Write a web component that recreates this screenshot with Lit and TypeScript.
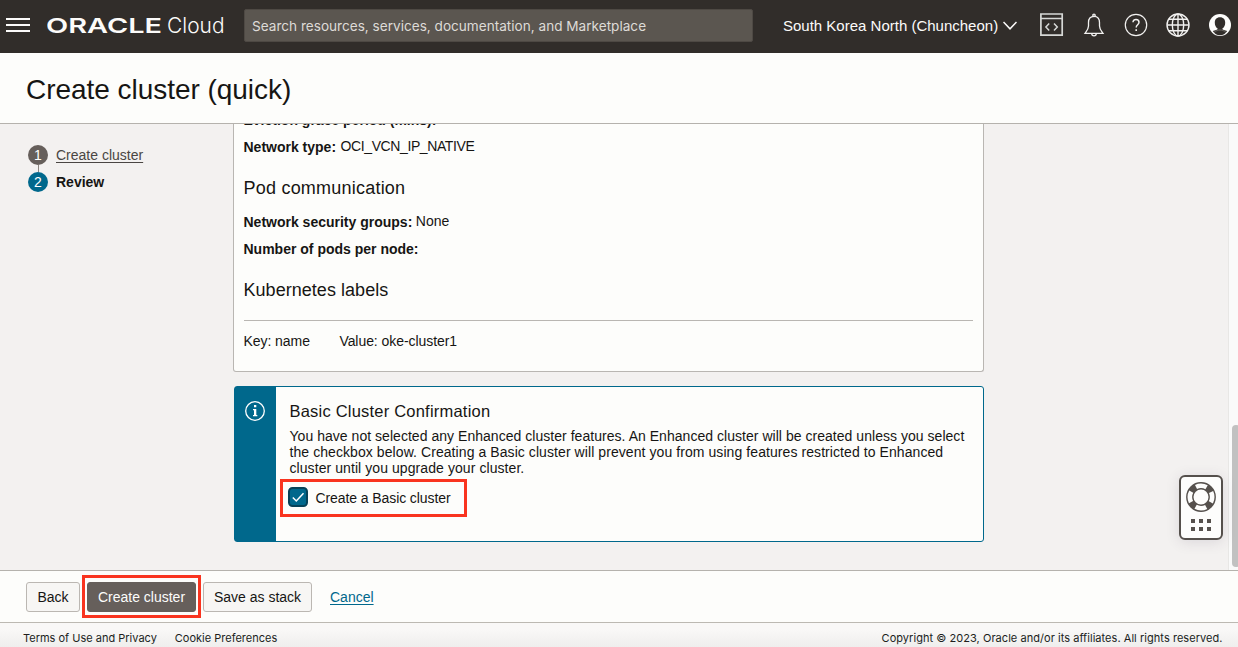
import { LitElement, html, css, svg } from "lit";
import { customElement, property } from "lit/decorators.js";

@customElement("cloud-header")
class CloudHeader extends LitElement {
  static styles = css`
    :host { display: block; flex: none; }
    .bar { display: flex; align-items: center; height: 53px; box-sizing: border-box; background: #312d2a; padding: 0 6px 3px; color: #fcfbfa; }
    .menu { display: flex; flex-direction: column; gap: 4px; width: 24px; margin-right: 17px; }
    .menu i { height: 2px; background: #fcfbfa; }
    .brand { display: block; width: 180px; height: 30px; margin-right: 17px; }
    .search { width: 509px; height: 33px; box-sizing: border-box; border: 1px solid #4e4944; border-radius: 2px; margin-top: 1px; background: #5b5650; color: #dedbd7; font: 13.6px/32px Inter, sans-serif; padding-left: 7px; white-space: nowrap; }
    .region { display: flex; align-items: center; margin-left: 30px; gap: 5px; font: 15px/20px "Liberation Sans", Arial, sans-serif; width: 235px; white-space: nowrap; margin-top: 1px; }
    .tools { display: flex; align-items: center; margin-left: 22px; gap: 18px; }
    svg { display: block; flex: none; }
  `;
  render() {
    return html`<header class="bar">
      <div class="menu"><i></i><i></i><i></i></div>
      <svg class="brand" viewBox="0 0 180 30" fill="#fcfbfa">
        <text x="-1" y="23" font-family="Inter, sans-serif" font-weight="600" font-size="20.500" textLength="116" lengthAdjust="spacingAndGlyphs">ORACLE</text>
        <text x="120" y="23" font-family="Inter, sans-serif" font-weight="300" font-size="21.500" textLength="57.500" lengthAdjust="spacingAndGlyphs">Cloud</text>
      </svg>
      <div class="search">Search resources, services, documentation, and Marketplace</div>
      <div class="region"><span>South Korea North (Chuncheon)</span>
        <svg width="14" height="9" viewBox="0 0 14 9" fill="none" stroke="#fcfbfa" stroke-width="1.5"><path d="M0.5 1 7 7.800 13.500 1"/></svg>
      </div>
      <div class="tools">
        <svg width="24" height="24" viewBox="0 0 24 24" fill="none" stroke="#d6d8d6" stroke-width="1.700"><path d="M.9 1H22.200V22.200H.9ZM1 5.500H22"/><path d="M9.200 10.500 5.900 14l3.300 3.500M14 10.500 17.300 14l-3.300 3.500" stroke-width="1.500"/></svg>
        <svg width="24" height="24" viewBox="0 0 24 24" fill="none" stroke="#f2f1f0" stroke-width="1.300"><path d="M12 3.300c-4 0-5.500 2.700-5.500 6.200v3.500c0 3-1.500 4.500-3.500 7.300h18c-2-2.800-3.500-4.300-3.500-7.300V9.500c0-3.500-1.500-6.200-5.500-6.200Z"/><circle cx="12" cy="2.300" r="1.200"/><path d="M9.700 20.600a2.300 2.300 0 0 0 4.600 0"/></svg>
        <svg width="24" height="24" viewBox="0 0 24 24" fill="none" stroke="#f2f1f0" stroke-width="1.200"><circle cx="12" cy="12" r="10.700"/><path d="M9 9.300c0-4 6-3.700 6 0 0 2.500-2.800 2.400-2.800 5.200" stroke-width="1.500"/><path d="M12.200 16.200v1.700" stroke-width="1.600"/></svg>
        <svg width="24" height="24" viewBox="0 0 24 24" fill="none" stroke="#f2f1f0" stroke-width="1.400"><circle cx="12" cy="12" r="11"/><ellipse cx="12" cy="12" rx="5.700" ry="11"/><path d="M12 1v22M1 12h22M3 6.300h18M3 17.700h18"/></svg>
        <svg width="24" height="24" viewBox="0 0 24 24"><circle cx="12" cy="12" r="11" fill="#fdfdfc"/><path d="M12 4.200c3.500 0 5.200 2.300 5.200 5.500 0 2.700-1.200 4.800-3 6 .2 1.100 2.800 1.700 5 2.300-1.600 2.800-4.200 4.300-7.200 4.300s-5.600-1.500-7.200-4.300c2.200-.6 4.800-1.200 5-2.300-1.800-1.200-3-3.300-3-6 0-3.200 1.700-5.500 5.200-5.500Z" fill="#312d2a"/><path d="M6 19.500c2-2 4-2.500 6-2.500s4 .5 6 2.500" fill="none" stroke="#77736f" stroke-width=".8"/></svg>
      </div>
    </header>`;
  }
}

@customElement("wizard-steps")
class WizardSteps extends LitElement {
  static styles = css`
    :host { display: block; }
    .step { display: flex; align-items: center; gap: 8px; height: 20px; font: 14px/20px "Liberation Sans", Arial, sans-serif; color: #4a4643; white-space: nowrap; }
    .num { width: 20px; height: 20px; border-radius: 50%; background: #665f5b; color: #fff; text-align: center; }
    .link { text-decoration: underline; text-underline-offset: 2px; }
    .line { width: 1px; height: 7px; margin-left: 10px; background: #8b8580; }
    .current { color: #161513; font-weight: bold; }
    .current .num { background: #00688c; font-weight: normal; }
  `;
  render() {
    return html`<div class="step"><span class="num">1</span><span class="link">Create cluster</span></div>
      <div class="line"></div>
      <div class="step current"><span class="num">2</span><span>Review</span></div>`;
  }
}

@customElement("detail-row")
class DetailRow extends LitElement {
  @property() label = "";
  @property() value = "";
  static styles = css`
    :host { display: flex; gap: 3.5px; height: 27px; font: 14px/27px "Liberation Sans", Arial, sans-serif; white-space: nowrap; }
    .value { line-height: 25px; }
  `;
  render() {
    return html`<b>${this.label}</b><span class="value">${this.value}</span>`;
  }
}

@customElement("support-widget")
class SupportWidget extends LitElement {
  static styles = css`
    :host { display: block; }
    .box { box-sizing: border-box; width: 44px; height: 65px; border: 2px solid #55504c; border-radius: 6px; background: #fdfdfc; box-shadow: 0 2px 14px rgba(60, 50, 80, 0.13); }
    svg { display: block; }
  `;
  render() {
    const dots = [10, 18, 26].flatMap((x) => [42, 50].map((y) => svg`<rect x=${x} y=${y} width="4" height="4"/>`));
    return html`<div class="box"><svg width="40" height="61" viewBox="0 0 40 61" fill="#55504c">
      <circle cx="20" cy="20" r="11.200" fill="none" stroke="#55504c" stroke-width="7.400"/>
      <circle cx="20" cy="20" r="11.200" fill="none" stroke="#fdfdfc" stroke-width="4.600" stroke-dasharray="11 6.593" stroke-dashoffset="5.500"/>
      <g>${dots}</g></svg></div>`;
  }
}

@customElement("app-root")
class AppRoot extends LitElement {
  static styles = css`
    :host { display: flex; flex-direction: column; width: 1238px; height: 647px; overflow: hidden; color: #161513; background: #fdfdfb; font: 14px/20px "Liberation Sans", Arial, sans-serif; }
    .title { flex: none; box-sizing: border-box; height: 71px; border-bottom: 1px solid #b5b2ad; padding: 1px 26px 0; margin: 0; font-size: 28px; line-height: 71px; font-weight: normal; letter-spacing: -0.040px; }
    .main { flex: none; position: relative; display: flex; height: 446px; overflow: hidden; background: #f3f1f0; }
    .steps { width: 205px; padding: 21px 0 0 28px; }
    .content { width: 751px; }
    .card { box-sizing: border-box; height: 248px; border: 1px solid #b9b6b2; border-top: 0; border-radius: 0 0 3px 3px; background: #fdfdfb; padding: 0 10px 0 9.500px; overflow: hidden; }
    .rows { margin-top: -17px; }
    .network { display: flex; gap: 4.500px; height: 27px; line-height: 27px; }
    .network span { line-height: 25px; letter-spacing: -0.400px; }
    .sub { margin: 0; font-size: 18px; font-weight: normal; line-height: 24px; }
    .pod { padding: 15px 0 9px; letter-spacing: 0.220px; }
    .kube { padding: 15px 0 18px; letter-spacing: 0.040px; }
    .pair { display: flex; gap: 29.500px; border-top: 1px solid #b9b6b2; padding-top: 10px; line-height: 21px; letter-spacing: -0.060px; }
    .notice { box-sizing: border-box; display: flex; height: 156px; margin: 14px 0 0 1px; border: 1px solid #00688c; border-radius: 3px; background: #fdfdfb; }
    .stripe { width: 41px; background: #00688c; padding: 14px 1px 0 0; display: flex; justify-content: center; box-sizing: border-box; }
    .stripe svg { display: block; }
    .body { flex: 1; padding: 14px 0 0 13.500px; }
    .head { font-size: 16.500px; line-height: 20px; letter-spacing: 0.210px; }
    .text { margin: 7px 0 0; line-height: 16px; white-space: nowrap; letter-spacing: 0.075px; }
    .first { letter-spacing: 0.035px; }
    .mark { box-sizing: border-box; border: 3px solid #f9341f; }
    .agree { display: flex; align-items: center; gap: 8px; width: 187.500px; height: 38px; margin: 3px 0 0 -10px; padding: 0 5px 2px; }
    .agree span { padding-top: 2px; letter-spacing: -0.090px; }
    .tick { display: block; }
    .rail { box-sizing: border-box; width: 10px; margin-left: auto; border-left: 1px solid #e8e7e5; background: #fafafa; padding: 301px 0 0 3px; overflow: hidden; }
    .thumb { width: 8px; height: 142px; border-radius: 4px; background: #c1c1c1; }
    .help { position: absolute; left: 1179px; top: 351px; }
    .actions { flex: none; box-sizing: border-box; height: 52px; display: flex; align-items: center; border-top: 1px solid #b5b2ad; padding: 1px 26px 0; }
    .btn { box-sizing: border-box; height: 30px; border: 1px solid #bbb7b2; border-radius: 3px; background: #f7f6f4; text-align: center; line-height: 28px; white-space: nowrap; }
    .back { width: 54px; margin-right: 2px; }
    .save { width: 109px; margin-left: 2px; }
    .primary { width: 119px; height: 43px; padding: 4px 2px; margin-bottom: 1px; }
    .primary .btn { background: #665f5b; border-color: #665f5b; color: #fdfdfb; width: 109px; }
    .cancel { color: #00688c; text-decoration: underline; text-underline-offset: 2px; margin-left: 18px; }
    .foot { flex: 1; display: flex; border-top: 1px solid #bcb9b2; padding: 0 15.500px 0 23px; background: linear-gradient(#f9f8f7 20%, #ecebea); font: 11px/30px Inter, sans-serif; color: #201e1c; }
    .cookie { margin-left: 18px; }
    .copy { margin-left: auto; letter-spacing: 0.045px; }
  `;
  render() {
    return html`<cloud-header></cloud-header>
      <h1 class="title">Create cluster (quick)</h1>
      <div class="main">
        <wizard-steps class="steps"></wizard-steps>
        <div class="content">
          <section class="card">
            <div class="rows">
              <detail-row label="Eviction grace period (mins):" value="60"></detail-row>
              <div class="network"><b>Network type:</b><span>OCI_VCN_IP_NATIVE</span></div>
            </div>
            <h3 class="sub pod">Pod communication</h3>
            <detail-row label="Network security groups:" value="None"></detail-row>
            <detail-row label="Number of pods per node:"></detail-row>
            <h3 class="sub kube">Kubernetes labels</h3>
            <div class="pair"><span>Key: name</span><span>Value: oke-cluster1</span></div>
          </section>
          <section class="notice">
            <div class="stripe"><svg width="20" height="20" viewBox="0 0 20 20"><circle cx="10" cy="10" r="9.300" fill="none" stroke="#fff" stroke-width="1.300"/><path d="M9 4h2.300v2.200H9ZM8 8h3.300v6H12.300v1.300H8V14h1V9.300H8Z" fill="#fff"/></svg></div>
            <div class="body">
              <div class="head">Basic Cluster Confirmation</div>
              <p class="text"><span class="first">You have not selected any Enhanced cluster features. An Enhanced cluster will be created unless you select</span><br>the checkbox below. Creating a Basic cluster will prevent you from using features restricted to Enhanced<br>cluster until you upgrade your cluster.</p>
              <div class="agree mark">
                <svg class="tick" width="20" height="20" viewBox="0 0 20 20"><rect x="1" y="1" width="18" height="18" rx="3.500" fill="#00688c" stroke="#064258" stroke-width="2"/><path d="M4.800 10.500 8.300 14 15.500 6.300" fill="none" stroke="#fff" stroke-width="1.500"/></svg>
                <span>Create a Basic cluster</span>
              </div>
            </div>
          </section>
        </div>
        <div class="rail"><div class="thumb"></div></div>
        <support-widget class="help"></support-widget>
      </div>
      <div class="actions">
        <div class="btn back">Back</div>
        <div class="primary mark"><div class="btn">Create cluster</div></div>
        <div class="btn save">Save as stack</div>
        <span class="cancel">Cancel</span>
      </div>
      <footer class="foot"><span>Terms of Use and Privacy</span><span class="cookie">Cookie Preferences</span><span class="copy">Copyright © 2023, Oracle and/or its affiliates. All rights reserved.</span></footer>`;
  }
}
